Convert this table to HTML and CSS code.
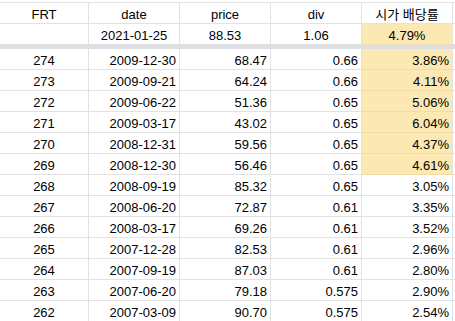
FILE: index.html
```html
<!DOCTYPE html>
<html lang="ko">
<head>
  <meta charset="UTF-8">
  <title>FRT 배당률</title>
  <link rel="stylesheet" href="styles.css">
</head>
<body>
<table class="sheet">
  <colgroup>
    <col class="c-frt"><col class="c-std"><col class="c-std"><col class="c-std"><col class="c-std"><col class="c-rest">
  </colgroup>
  <thead>
    <tr class="head">
      <th>FRT</th><th>date</th><th>price</th><th>div</th><th class="kr">시가 배당률</th><th class="rest"></th>
    </tr>
    <tr class="current">
      <td></td><td>2021-01-25</td><td>88.53</td><td>1.06</td><td class="hl">4.79%</td><td class="rest"></td>
    </tr>
    <tr class="freeze"><td colspan="6"></td></tr>
  </thead>
  <tbody id="rows"></tbody>
</table>

<script>
  const history = [
    ['274', '2009-12-30', '68.47', '0.66', '3.86%', true],
    ['273', '2009-09-21', '64.24', '0.66', '4.11%', true],
    ['272', '2009-06-22', '51.36', '0.65', '5.06%', true],
    ['271', '2009-03-17', '43.02', '0.65', '6.04%', true],
    ['270', '2008-12-31', '59.56', '0.65', '4.37%', true],
    ['269', '2008-12-30', '56.46', '0.65', '4.61%', true],
    ['268', '2008-09-19', '85.32', '0.65', '3.05%'],
    ['267', '2008-06-20', '72.87', '0.61', '3.35%'],
    ['266', '2008-03-17', '69.26', '0.61', '3.52%'],
    ['265', '2007-12-28', '82.53', '0.61', '2.96%'],
    ['264', '2007-09-19', '87.03', '0.61', '2.80%'],
    ['263', '2007-06-20', '79.18', '0.575', '2.90%'],
    ['262', '2007-03-09', '90.70', '0.575', '2.54%']
  ];

  const body = document.getElementById('rows');
  history.forEach(function(r) {
    const tr = document.createElement('tr');
    tr.className = 'data';
    tr.innerHTML = `
      <td class="id">${r[0]}</td>
      <td>${r[1]}</td>
      <td>${r[2]}</td>
      <td>${r[3]}</td>
      <td class="${r[5] ? 'hl' : ''}">${r[4]}</td>
      <td class="rest"></td>`;
    body.appendChild(tr);
  });
</script>
</body>
</html>
```

FILE: styles.css
```css
html, body { margin: 0; padding: 0; background: #fff; }
body { font-family: 'Liberation Sans', Arial, 'Noto Sans CJK KR', sans-serif; font-size: 13px; color: #000; }

.sheet { table-layout: fixed; width: 455px; border-collapse: separate; border-spacing: 0; margin-top: 2px; }
.c-frt { width: 89px; }
.c-std { width: 91px; }
.c-rest { width: 3px; }

.sheet th, .sheet td {
  box-sizing: border-box; height: 21px; padding: 4px 3px 0 3px; line-height: 15px;
  border-right: 1px solid #e2e2e2; border-bottom: 1px solid #e2e2e2;
  font-weight: 400; vertical-align: top; white-space: nowrap; overflow: hidden;
}
.sheet .rest { border-right: none; padding: 0; }

.head th { height: 22px; border-top: 1px solid #e2e2e2; text-align: center; }
.head .kr { font-family: 'Liberation Sans', 'Noto Sans CJK KR', sans-serif; }

.current td { text-align: center; }

.freeze td { height: 4px; padding: 0; border: none; background: #dce0e6; }

.data td { text-align: right; }
.data td.id { text-align: center; }

.sheet td.hl { background: #fce8b2; border-bottom-color: #eedca9; }
```
